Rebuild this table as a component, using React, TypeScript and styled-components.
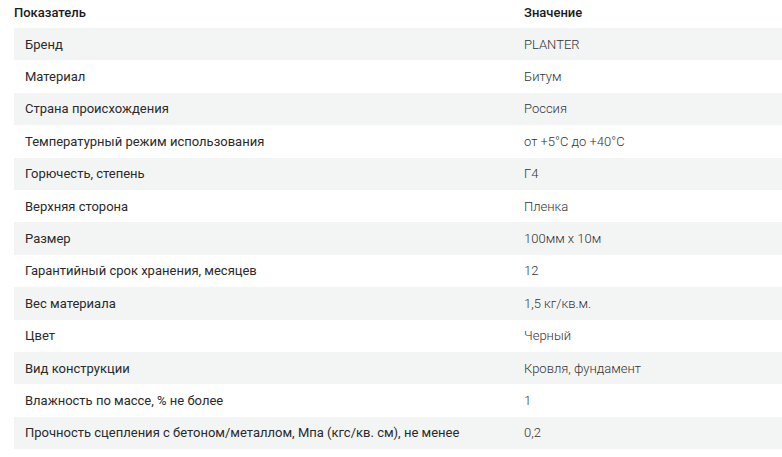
import React from "react";
import styled, { createGlobalStyle } from "styled-components";

const Global = createGlobalStyle`
  html, body { margin: 0; padding: 0; background: #fff; }
  body { font-family: Roboto, "Noto Sans", Arial, sans-serif; }
`;

const Wrap = styled.div`
  padding-left: 14px;
  width: 768px;
`;

const Table = styled.div`
  display: grid;
  grid-template-columns: 510px 1fr;
`;

const Head = styled.div`
  display: contents;
`;

const HeadCell = styled.div`
  height: 28px;
  display: flex;
  align-items: center;
  font-size: 13px;
  font-weight: 500;
  color: #1a1a1a;
  padding-bottom: 4px;
  box-sizing: border-box;
`;

const Row = styled.div<{ $odd: boolean }>`
  display: contents;
  & > div { background: ${(p) => (p.$odd ? "#f3f5f5" : "#fff")}; }
`;

const Cell = styled.div<{ $value?: boolean }>`
  height: 32.4px;
  display: flex;
  align-items: center;
  padding-left: ${(p) => (p.$value ? "0" : "11px")};
  font-size: 13px;
  font-weight: ${(p) => (p.$value ? 300 : 400)};
  color: ${(p) => (p.$value ? "#333" : "#2a2a2a")};
  white-space: nowrap;
`;

const rows: [string, string][] = [
  ["Бренд", "PLANTER"],
  ["Материал", "Битум"],
  ["Страна происхождения", "Россия"],
  ["Температурный режим использования", "от +5°С до +40°С"],
  ["Горючесть, степень", "Г4"],
  ["Верхняя сторона", "Пленка"],
  ["Размер", "100мм x 10м"],
  ["Гарантийный срок хранения, месяцев", "12"],
  ["Вес материала", "1,5 кг/кв.м."],
  ["Цвет", "Черный"],
  ["Вид конструкции", "Кровля, фундамент"],
  ["Влажность по массе, % не более", "1"],
  ["Прочность сцепления с бетоном/металлом, Мпа (кгс/кв. см), не менее", "0,2"],
];

export default function App() {
  return (
    <>
      <Global />
      <Wrap>
        <Table>
          <Head>
            <HeadCell>Показатель</HeadCell>
            <HeadCell>Значение</HeadCell>
          </Head>
          {rows.map(([k, v], i) => (
            <Row key={k} $odd={i % 2 === 0}>
              <Cell>{k}</Cell>
              <Cell $value>{v}</Cell>
            </Row>
          ))}
        </Table>
      </Wrap>
    </>
  );
}
